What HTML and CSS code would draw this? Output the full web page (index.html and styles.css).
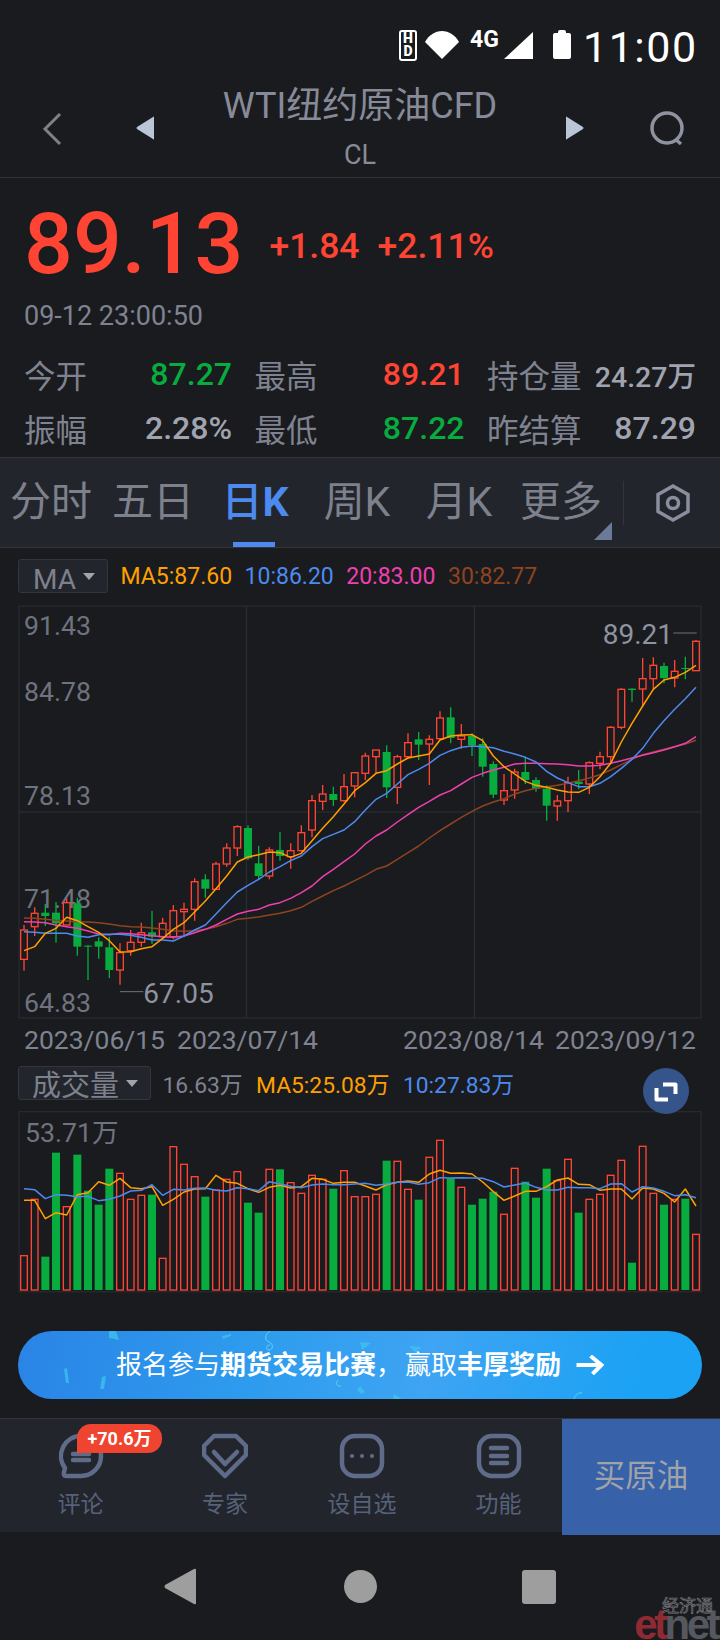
FILE: index.html
```html
<!DOCTYPE html>
<html lang="zh-CN">
<head>
    <meta charset="UTF-8">
    <title>WTI纽约原油CFD</title>
    <link rel="stylesheet" href="styles.css">
</head>
<body>
<div id="app">
    <!-- status bar -->
    <div class="status">
        <div class="hd"><span>H</span><span>D</span></div>
        <svg class="wifi" viewBox="0 0 34 28"><path d="M0 11C4 4 10 0 17 0s13 4 17 11L17 28z"/></svg>
        <span class="net">4G</span>
        <svg class="signal" viewBox="0 0 29 27"><path d="M0 27L29 0v27z"/></svg>
        <svg class="battery" viewBox="0 0 18 29"><path d="M5 2q0-2 2-2h4q2 0 2 2v1h3q2 0 2 2v22q0 2-2 2H2q-2 0-2-2V5q0-2 2-2h3z"/></svg>
        <span class="clock">11:00</span>
    </div>

    <!-- title -->
    <div class="header">
        <svg class="back" viewBox="0 0 20 34"><path d="M18 2L3 17l15 15"/></svg>
        <svg class="tri" viewBox="0 0 18 24"><path d="M18 1v22q0 1-1 0L1 13q-1-1 0-2L17 1q1-1 1 0z"/></svg>
        <div class="title">
            <h1>WTI纽约原油CFD</h1>
            <p>CL</p>
        </div>
        <svg class="tri" viewBox="0 0 18 24"><path d="M0 1v22q0 1 1 0l16-10q1-1 0-2L1 1Q0 0 0 1z"/></svg>
        <svg class="search" viewBox="0 0 36 35"><circle cx="18" cy="17" r="15"/><path d="M26 28l6 5"/></svg>
    </div>

    <!-- quote -->
    <div class="quote">
        <div class="price-row">
            <span class="price">89.13</span>
            <span class="change">+1.84</span>
            <span class="change">+2.11%</span>
        </div>
        <div class="time">09-12 23:00:50</div>
    </div>

    <div class="stats">
        <div class="stat"><label>今开</label><b class="down">87.27</b></div>
        <div class="stat"><label>最高</label><b class="up">89.21</b></div>
        <div class="stat"><label>持仓量</label><b class="small">24.27万</b></div>
        <div class="stat"><label>振幅</label><b>2.28%</b></div>
        <div class="stat"><label>最低</label><b class="down">87.22</b></div>
        <div class="stat"><label>昨结算</label><b>87.29</b></div>
    </div>

    <!-- period tabs -->
    <div class="tabs">
        <ul class="tab-list">
            <li>分时</li>
            <li>五日</li>
            <li class="select">日<b>K</b></li>
            <li>周K</li>
            <li>月K</li>
            <li class="more">更多</li>
        </ul>
        <div class="tab-set">
            <svg class="hex" viewBox="0 0 34 38"><path d="M17 2l15 8.500v17L17 36 2 27.500v-17z"/><circle cx="17" cy="19" r="5.500"/></svg>
        </div>
    </div>

    <div class="legend legend-ma">
        <div class="drop drop-ma">MA</div>
        <span class="c5">MA5:87.60</span>
        <span class="c10">10:86.20</span>
        <span class="c20">20:83.00</span>
        <span class="c30">30:82.77</span>
    </div>

    <!-- k line, drawn in 3x units -->
    <svg id="kline" class="chart chart-k" viewBox="0 0 2160 1260">
        <rect class="frame" x="57" y="18" width="2046" height="1236"/>
        <path class="grid" d="M57 636H2103M739 18V1254M1423 18V1254"/>
        <text class="axis" x="72" y="105">91.43</text>
        <text class="axis" x="72" y="303">84.78</text>
        <text class="axis" x="72" y="615">78.13</text>
        <text class="axis" x="72" y="925">71.48</text>
        <text class="axis" x="72" y="1236">64.83</text>
        <path class="mark" d="M360 1175H430M2020 99H2090"/>
        <text class="peak" x="430" y="1208">67.05</text>
        <text class="peak" x="1808" y="132">89.21</text>
    </svg>

    <div class="dates">
        <div class="date-group"><span>2023/06/15</span><span>2023/07/14</span></div>
        <div class="date-group"><span>2023/08/14</span><span>2023/09/12</span></div>
    </div>

    <div class="legend legend-vol">
        <div class="drop drop-vol">成交量</div>
        <span class="plain">16.63万</span>
        <span class="c5">MA5:25.08万</span>
        <span class="c10">10:27.83万</span>
        <div class="expand">
            <svg viewBox="0 0 24 24"><path d="M9 5.500H21.500V15M2.500 9V20.500H14"/></svg>
        </div>
    </div>

    <svg id="volume" class="chart chart-vol" viewBox="0 165 2160 570">
        <rect class="frame" x="57" y="185" width="2046" height="540"/>
        <text class="axis" x="75" y="275">53.71万</text>
    </svg>

    <!-- contest banner -->
    <div class="banner">
        <svg class="banner-bg" viewBox="0 0 684 68">
            <path class="spark" d="M91 0h7l3 9-10-2zM46 38l3-1 2 15h-3zM84 46l4-1-2 13h-4zM204 5l9-2v2l-8 3z"/>
            <path class="spark" d="M342 11l11 1-9 7zM391 15l13 1-7 5zM342 55l5 6-4 2-4-4zM376 63l8 5h-9zM422 46l2-14 1 1-1 13z"/>
            <path class="curl" d="M252 0c-5 3-6 9-1 11s4 8 0 8-3-5 1-5M323 55c-4 1-6-3-3-6M556 68c1-4 5-7 8-6"/>
        </svg>
        <p>报名参与<b>期货交易比赛</b><span class="comma">，</span>赢取<b>丰厚奖励</b></p>
        <svg class="arrow" viewBox="0 0 28 20"><path d="M1 10h25M15 1l11 9-9 9"/></svg>
    </div>

    <!-- bottom tool bar -->
    <div class="tools">
        <div class="tool">
            <svg class="tool-icon" viewBox="0 0 46 46">
                <path d="M23 3A20 20 0 0 1 23 43H8Q5 43 6 39L7 35A20 20 0 0 1 23 3Z"/>
                <path d="M15 21H31M15 27H31"/>
            </svg>
            <span>评论</span>
            <em class="badge">+70.6万</em>
        </div>
        <div class="tool">
            <svg class="tool-icon" viewBox="0 0 46 46">
                <path d="M12 3H34L44 13V22L23 43 2 22V13Z"/>
                <path d="M12 19L23 31 35 19"/>
            </svg>
            <span>专家</span>
        </div>
        <div class="tool">
            <svg class="tool-icon" viewBox="0 0 46 46">
                <rect x="3" y="3" width="40" height="40" rx="13"/>
                <path class="dots" d="M13 23h.1M23 23h.1M33 23h.1"/>
            </svg>
            <span>设自选</span>
        </div>
        <div class="tool">
            <svg class="tool-icon" viewBox="0 0 46 46">
                <rect x="3" y="3" width="40" height="40" rx="13"/>
                <path d="M15 15H31M15 23H31M15 30H31"/>
            </svg>
            <span>功能</span>
        </div>
        <div class="buy">买原油</div>
    </div>

    <!-- android nav -->
    <div class="nav">
        <svg class="nav-back" viewBox="0 0 32 37"><path d="M32 2v33q0 2-2 1L1 20q-1-1 0-3L30 1q2-1 2 1z"/></svg>
        <div class="nav-home"></div>
        <div class="nav-recent"></div>
    </div>

    <div class="logo">
        <span class="logo-cn">经济通</span>
        <span class="logo-en"><i>et</i>net</span>
    </div>
</div>
<script src="chart.js"></script>
</body>
</html>
```

FILE: styles.css
```css
*{
    padding: 0;
    margin: 0;
    box-sizing: border-box;
}
html,body{
    background: #1a1b1e;
}
body{
    font-family: Roboto, "Noto Sans CJK SC", sans-serif;
}
li{
    list-style: none;
}
svg{
    display: block;
}
#app{
    position: relative;
    width: 720px;
    height: 1640px;
    overflow: hidden;
    background: #1a1b1e;
}

/* status bar */
.status{
    height: 78px;
    padding: 30px 0 0 399px;
    display: flex;
    align-items: flex-start;
    color: #fff;
}
.status svg{
    flex-shrink: 0;
}
.hd{
    width: 18px;
    height: 31px;
    border: 2px solid #fff;
    border-radius: 3px;
    font-size: 14px;
    font-weight: 900;
    line-height: 13px;
    text-align: center;
}
.hd span{
    display: block;
}
.wifi{
    width: 34px;
    height: 28px;
    margin: 1px 0 0 8px;
    fill: #fff;
}
.net{
    width: 30px;
    margin-left: 11px;
    font-size: 23px;
    font-weight: 700;
    line-height: 20px;
}
.signal{
    width: 29px;
    height: 27px;
    margin: 2px 0 0 4px;
    fill: #fff;
}
.battery{
    width: 18px;
    height: 29px;
    margin-left: 20px;
    fill: #fff;
}
.clock{
    margin-left: 12px;
    font-size: 43px;
    line-height: 34px;
    letter-spacing: 1.500px;
}

/* title */
.header{
    height: 100px;
    display: grid;
    grid-template-columns: 136px 18px 1fr 18px 136px;
    align-items: center;
    border-bottom: 1px solid #33353a;
}
.back{
    width: 20px;
    height: 34px;
    margin: 0 0 0 42px;
    position: relative;
    top: 1px;
    fill: none;
    stroke: #7f8187;
    stroke-width: 3;
}
.tri{
    width: 18px;
    height: 24px;
    fill: #b8c6d8;
}
.title{
    align-self: start;
    padding-top: 6px;
    text-align: center;
    color: #878b99;
}
.title h1{
    font-size: 36px;
    font-weight: 400;
    line-height: 44px;
}
.title p{
    margin-top: 12px;
    font-size: 27px;
    line-height: 30px;
}
.search{
    width: 36px;
    height: 35px;
    margin-left: 65px;
    fill: none;
    stroke: #8f93a0;
    stroke-width: 3.500;
    position: relative;
    top: 1px;
}

/* quote */
.quote{
    height: 168px;
    padding: 0 24px;
}
.price-row{
    height: 121px;
    padding-top: 11px;
    display: flex;
    align-items: center;
    color: #ff4433;
}
.price{
    font-size: 86px;
    line-height: 110px;
    font-weight: 500;
    margin-right: 26px;
}
.change{
    margin: 4px 18px 0 0;
    font-size: 35.500px;
    font-weight: 500;
}
.time{
    margin-top: 1px;
    font-size: 27px;
    line-height: 32px;
    color: #7f8391;
}
.stats{
    height: 111px;
    padding: 1px 24px 0;
    display: grid;
    grid-template-columns: 208px 210px 209px;
    grid-template-rows: repeat(2, 54px);
    column-gap: 22.500px;
}
.stat{
    display: flex;
    justify-content: space-between;
    align-items: center;
}
.stat label{
    font-size: 31.500px;
    color: #7f8391;
}
.stat b{
    font-size: 32px;
    font-weight: 500;
    color: #a0a4b0;
}
.stat b.small{
    font-size: 28.500px;
}
.stat b.up{
    color: #ff4433;
}
.stat b.down{
    color: #08ac3e;
}

/* period tabs */
.tabs{
    height: 91px;
    display: flex;
    background: #23252c;
    border-top: 1px solid #33353a;
    border-bottom: 1px solid #33353a;
}
.tab-list{
    width: 612px;
    display: flex;
}
.tab-list li{
    position: relative;
    width: 102px;
    line-height: 89px;
    text-align: center;
    font-size: 41px;
    white-space: nowrap;
    color: #7d818c;
}
.tab-list li.select{
    color: #4d8af0;
    font-weight: 500;
}
.tab-list li.select b{
    font-weight: 700;
}
.tab-list li.select:after{
    content: "";
    position: absolute;
    left: 29px;
    bottom: 0;
    width: 42px;
    height: 5px;
    background: #4d8af0;
}
.tab-list li.more:after{
    content: "";
    position: absolute;
    right: 0;
    bottom: 7px;
    border-left: 18px solid transparent;
    border-bottom: 18px solid #6b7a99;
}
.tab-set{
    flex: 1;
    display: flex;
    align-items: center;
    justify-content: center;
    height: 44px;
    margin: 23px 0 0 11px;
    padding-left: 2px;
    border-left: 1px solid #33353a;
}
.hex{
    width: 34px;
    height: 38px;
    fill: none;
    stroke: #8a8f9e;
    stroke-width: 3.500;
}

/* indicator legends */
.legend{
    display: flex;
    align-items: center;
    font-size: 23px;
    white-space: nowrap;
}
.legend-ma{
    height: 52px;
    padding: 7px 0 3px 18px;
    column-gap: 12.500px;
}
.legend-vol{
    height: 34px;
    margin-top: 6px;
    padding-left: 18px;
    column-gap: 13.500px;
    font-size: 22.800px;
    position: relative;
}
.drop{
    position: relative;
    height: 34px;
    border: 1px solid #33363d;
    border-radius: 3px;
    background: #23252c;
    color: #7d818c;
}
.drop:after{
    content: "";
    position: absolute;
    top: 13px;
    border-left: 6px solid transparent;
    border-right: 6px solid transparent;
    border-top: 7px solid #a0a4b0;
}
.drop-ma{
    width: 90px;
    padding-left: 14px;
    font-size: 28px;
    line-height: 40px;
}
.drop-ma:after{
    right: 12px;
}
.drop-vol{
    width: 133px;
    padding-left: 13px;
    font-size: 29px;
    line-height: 38px;
    margin-right: -2px;
}
.drop-vol:after{
    right: 12px;
}
.c5{
    color: #ffa000;
}
.c10{
    color: #4d8af0;
}
.c20{
    color: #f03fb0;
}
.c30{
    color: #8f4420;
}
.plain{
    color: #7f8391;
}
.expand{
    position: absolute;
    left: 643px;
    top: 2px;
    width: 46px;
    height: 46px;
    padding: 11px;
    border-radius: 50%;
    background: #35558a;
}
.expand svg{
    fill: none;
    stroke: #fff;
    stroke-width: 4;
    stroke-linejoin: round;
}

/* charts */
.chart{
    width: 720px;
}
.chart-k{
    height: 420px;
}
.chart-vol{
    height: 190px;
    margin-top: 5px;
}
.frame{
    fill: none;
    stroke: #27292f;
    stroke-width: 4;
}
.grid{
    fill: none;
    stroke: #2f3139;
    stroke-width: 3;
}
.axis{
    font-size: 80px;
    fill: #6f7380;
}
.peak{
    font-size: 84px;
    fill: #8f93a0;
}
.mark{
    fill: none;
    stroke: #6f7380;
    stroke-width: 3;
}
.wick-up,.bar-up,.body-up{
    stroke: #ff4433;
}
.body-up,.bar-up{
    fill: #1a1b1e;
    stroke-width: 4;
}
.wick-up,.wick-down{
    stroke-width: 4;
}
.wick-down{
    stroke: #08ac3e;
}
.body-down,.bar-down{
    fill: #08ac3e;
}
.line{
    fill: none;
    stroke-width: 4.500;
    stroke-linejoin: round;
}
.line-5{
    stroke: #ffa000;
}
.line-10{
    stroke: #4d8af0;
}
.line-20{
    stroke: #f03fb0;
}
.line-30{
    stroke: #8f4420;
}
.dates{
    height: 40px;
    padding: 1px 24px 0;
    display: grid;
    grid-template-columns: 294px 293px;
    column-gap: 85px;
    font-size: 26.500px;
    line-height: 38px;
    color: #7f8391;
}
.date-group{
    display: flex;
    justify-content: space-between;
}

/* contest banner */
.banner{
    position: relative;
    width: 684px;
    height: 68px;
    margin: 36px 0 0 18px;
    display: flex;
    align-items: center;
    padding-left: 98px;
    border-radius: 34px;
    overflow: hidden;
    color: #fff;
    background: linear-gradient(100deg, #2a84e6 0%, #2e9cee 35%, #3ea4f3 60%, #1ca2f4 90%);
}
.banner-bg{
    position: absolute;
    left: 0;
    top: 0;
    width: 684px;
    height: 68px;
}
.spark{
    fill: #3dc4ee;
    opacity: .75;
}
.curl{
    fill: none;
    stroke: #5fd4ec;
    stroke-width: 1;
}
.banner p{
    position: relative;
    font-size: 26px;
    line-height: 68px;
    white-space: nowrap;
}
.banner b{
    font-weight: 700;
}
.comma{
    margin-right: 3px;
}
.arrow{
    position: relative;
    width: 29px;
    height: 20px;
    margin-left: 14px;
    fill: none;
    stroke: #fff;
    stroke-width: 4;
}

/* bottom tool bar */
.tools{
    height: 114px;
    margin-top: 19px;
    display: grid;
    grid-template-columns: 161px 128px 146px 127px 158px;
    background: #23252c;
    border-top: 1px solid #33353a;
}
.tool{
    position: relative;
    display: flex;
    flex-direction: column;
    align-items: center;
    padding-top: 14px;
    font-size: 23px;
    color: #56627a;
}
.tool span{
    margin-top: 11px;
    line-height: 30px;
}
.tool-icon{
    width: 46px;
    height: 46px;
    fill: none;
    stroke: #5e6c8a;
    stroke-width: 4.500;
    stroke-linecap: round;
    stroke-linejoin: round;
}
.dots{
    stroke-width: 4;
}
.badge{
    position: absolute;
    left: 77px;
    top: 5px;
    width: 85px;
    height: 29px;
    border-radius: 14px 14px 14px 0;
    background: #ef4530;
    color: #fff;
    font-size: 18px;
    font-weight: 700;
    font-style: normal;
    line-height: 29px;
    text-align: center;
}
.buy{
    background: #3761a8;
    color: #a0a3a8;
    font-size: 31.500px;
    line-height: 116px;
    text-align: center;
}

/* android nav */
.nav{
    height: 108px;
    padding-top: 36px;
    display: flex;
    align-items: flex-start;
}
.nav-back{
    width: 32px;
    height: 37px;
    margin-left: 164px;
    fill: #9e9e9e;
}
.nav-home{
    width: 33px;
    height: 33px;
    margin: 2px 0 0 148px;
    border-radius: 50%;
    background: #9e9e9e;
}
.nav-recent{
    width: 34px;
    height: 34px;
    margin: 2px 0 0 145px;
    border-radius: 3px;
    background: #9e9e9e;
}

/* watermark */
.logo{
    position: absolute;
    right: 3px;
    bottom: 0;
    width: 90px;
    text-align: right;
    line-height: 1;
}
.logo-cn{
    display: block;
    margin-right: 4px;
    font-size: 17px;
    line-height: 18px;
    color: #1a1b1e;
    -webkit-text-stroke: .7px #77797d;
}
.logo-en{
    display: block;
    height: 28px;
    margin-top: -3px;
    font-family: "Liberation Sans", sans-serif;
    font-size: 42px;
    font-weight: 700;
    line-height: 26px;
    letter-spacing: -3.500px;
    color: #55585e;
}
.logo-en i{
    font-style: normal;
    color: #8f2a32;
}
```

FILE: chart.js
```js
// candle table, 3x chart units: [rise?, body top, body bottom, wick top, wick bottom]
var aCandle = [
    [1,990,1078,975,1112],[1,940,980,922,1008],[0,938,948,912,978],[0,938,970,906,1028],
    [1,908,975,895,975],[0,910,1040,893,1067],[0,1037,1040,1035,1140],[0,1024,1040,1012,1076],
    [0,1042,1110,1010,1134],[1,1058,1110,1030,1154],[1,1027,1052,990,1067],[1,998,1027,968,1040],
    [0,997,1010,933,1032],[1,970,1010,953,1018],[1,932,1010,915,1018],[1,928,935,908,1010],
    [1,845,928,835,962],[0,838,866,823,893],[1,792,868,785,870],[1,744,792,730,800],
    [1,680,744,676,768],[0,684,775,676,780],[0,790,828,737,838],[1,750,828,742,838],
    [0,750,768,696,782],[1,752,770,730,806],[1,698,752,676,755],[1,602,690,585,712],
    [1,582,604,555,630],[0,582,600,560,618],[1,560,602,522,605],[1,518,558,518,592],
    [1,468,520,458,540],[1,450,470,450,520],[0,456,562,436,594],[1,470,562,464,612],
    [1,428,470,400,476],[0,418,434,396,480],[1,418,432,406,555],[1,354,416,334,420],
    [0,352,414,322,430],[1,408,418,372,446],[0,408,436,400,468],[0,432,500,415,530],
    [0,492,584,484,594],[1,572,600,522,615],[1,516,570,506,596],[0,516,540,470,552],
    [0,540,566,532,575],[0,566,617,556,662],[1,603,618,585,662],[1,548,602,530,636],
    [0,545,552,510,568],[1,488,552,484,582],[1,470,490,455,508],[1,382,470,378,486],
    [1,268,382,265,388],[0,266,270,265,305],[1,236,267,174,316],[1,196,236,172,270],
    [0,198,234,188,250],[1,214,234,180,262],[0,204,207,170,238],[1,124,212,120,212]
];

var ma5 = [1052,1040,1000,985,952,962,980,997,1022,1056,1055,1046,1040,1015,988,968,936,903,866,828,786,771,764,756,758,772,760,722,685,650,612,572,
    548,520,512,492,474,468,462,420,408,405,404,422,468,500,522,544,556,562,570,576,577,562,530,490,426,370,318,268,240,232,217,196];
var ma10 = [995,997,1000,1000,1000,1008,1012,1004,1003,1003,1006,1012,1020,1020,1023,1008,990,975,942,908,876,856,838,816,800,782,768,740,716,703,690,665,
    630,598,580,552,524,508,490,466,452,442,438,440,443,454,462,472,486,514,534,548,560,560,550,530,505,478,445,400,362,328,296,262];
var ma20 = [965,966,968,975,980,985,993,1002,1004,1000,1001,1004,1007,1010,1012,1008,998,988,975,958,942,934,928,915,908,895,878,858,830,808,785,762,
    732,708,690,666,644,622,604,585,572,552,532,520,510,502,492,490,490,491,492,494,498,498,496,490,482,474,466,458,450,440,430,410];
var ma30 = [954,955,958,961,963,965,966,968,972,977,980,981,984,988,992,994,992,988,980,970,958,955,951,945,940,932,922,904,888,872,858,842,
    826,808,798,778,758,738,714,692,672,652,634,618,606,596,582,572,565,561,556,550,542,534,524,510,494,478,464,456,448,440,432,421];

// volume bars: [rise?, top]
var aVol = [
    [1,617],[1,448],[0,620],[0,308],[1,470],[0,314],[0,422],[0,464],[0,356],[1,370],[1,448],[1,436],[0,434],[1,625],[1,290],[1,343],
    [1,380],[0,440],[1,420],[1,388],[1,365],[0,458],[0,488],[1,358],[0,358],[1,398],[1,430],[1,376],[1,388],[0,416],[1,362],[1,440],
    [1,440],[1,433],[0,332],[1,334],[1,418],[0,449],[1,322],[1,271],[0,385],[1,412],[0,464],[0,446],[0,425],[1,493],[1,355],[0,395],
    [0,443],[0,356],[1,392],[1,328],[0,488],[1,448],[1,433],[1,376],[1,331],[0,638],[1,289],[1,430],[0,464],[1,448],[0,446],[1,553]
];
var vol5 = [451,451,506,488,495,434,428,395,406,385,413,416,410,466,448,426,417,416,376,396,400,416,427,412,406,414,410,385,388,400,397,397,
    408,420,404,397,393,397,372,361,370,369,372,396,425,451,438,424,424,410,390,384,403,404,421,417,417,447,414,417,430,456,417,468];
var vol10 = [416,419,446,434,436,440,439,452,448,438,423,421,404,436,418,420,415,414,421,423,413,416,422,395,402,409,413,405,402,404,404,402,
    400,406,402,397,396,403,398,383,384,383,384,385,395,411,405,399,412,420,420,412,413,413,416,402,401,426,410,414,424,437,434,443];

var oKline = document.getElementById('kline');
var oVolume = document.getElementById('volume');

function getX(i) {
    return 72 + 32 * i;
}

function add(parent, tag, cls, attrs) {
    var el = document.createElementNS('http://www.w3.org/2000/svg', tag);
    el.setAttribute('class', cls);
    for (var k in attrs) {
        el.setAttribute(k, attrs[k]);
    }
    parent.appendChild(el);
}

function drawLine(parent, data, cls) {
    var pts = [];
    for (var i = 0; i < data.length; i++) {
        pts.push(getX(i) + ',' + data[i]);
    }
    add(parent, 'polyline', 'line ' + cls, {points: pts.join(' ')});
}

for (var i = 0; i < aCandle.length; i++) {
    var c = aCandle[i];
    var x = getX(i);
    var half = c[0] ? 10 : 12; // hollow bodies get their width back from the stroke
    add(oKline, 'line', c[0] ? 'wick-up' : 'wick-down', {x1: x, x2: x, y1: c[3], y2: c[4]});
    add(oKline, 'rect', c[0] ? 'body-up' : 'body-down', {x: x - half, y: c[1], width: half * 2, height: c[2] - c[1]});
}
drawLine(oKline, ma30, 'line-30');
drawLine(oKline, ma20, 'line-20');
drawLine(oKline, ma10, 'line-10');
drawLine(oKline, ma5, 'line-5');

for (var j = 0; j < aVol.length; j++) {
    var v = aVol[j];
    var w = v[0] ? 10 : 12;
    add(oVolume, 'rect', v[0] ? 'bar-up' : 'bar-down', {x: getX(j) - w, y: v[1], width: w * 2, height: 720 - v[1]});
}
drawLine(oVolume, vol5, 'line-5');
drawLine(oVolume, vol10, 'line-10');
```
